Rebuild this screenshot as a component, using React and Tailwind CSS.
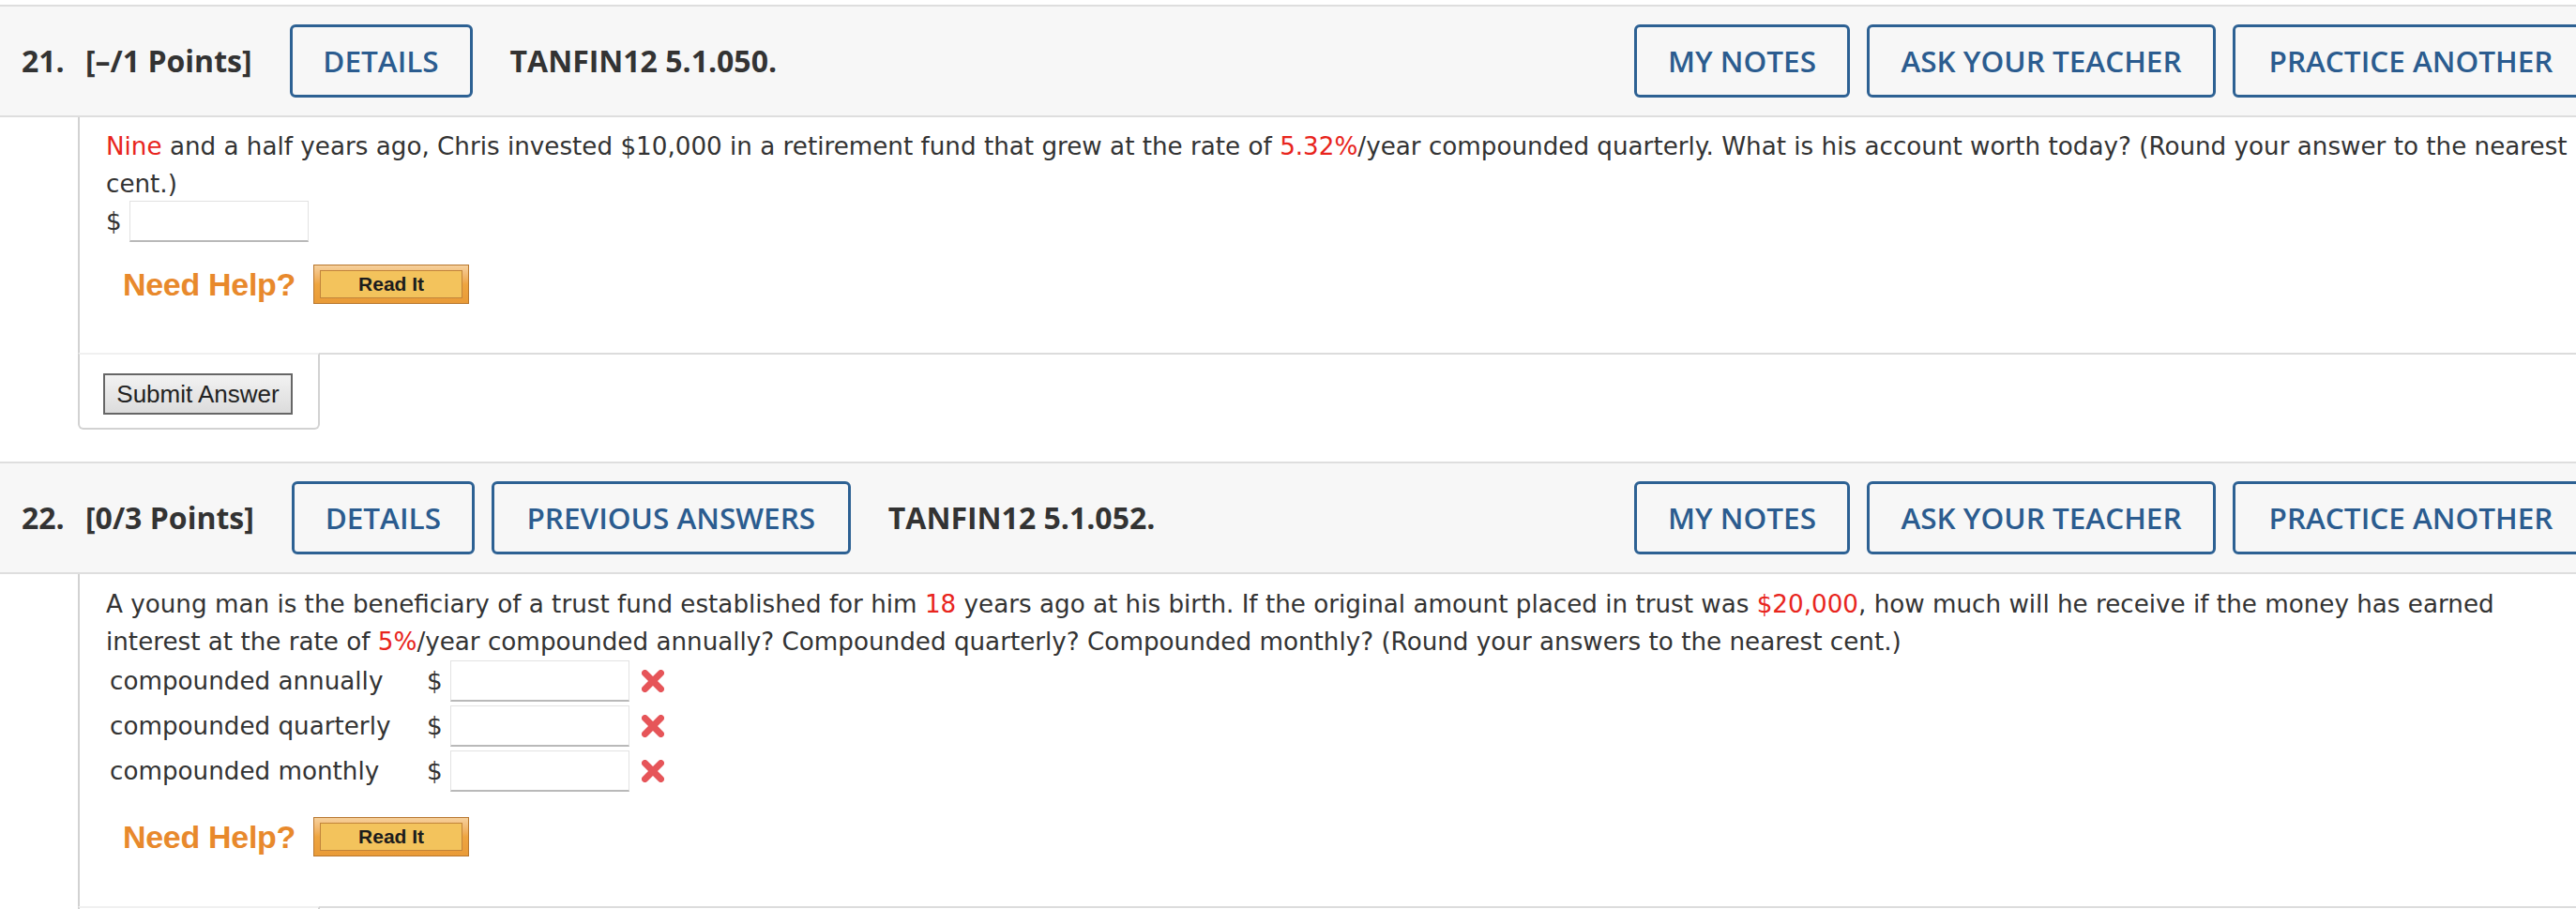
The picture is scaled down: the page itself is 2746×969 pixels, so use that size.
import React from 'react'

function HeadButton({ children, w }) {
  return (
    <div
      className={`${w} h-[78px] shrink-0 flex items-center justify-center rounded-[6px] border-[3px] border-[#2d6193] text-[#2b5c8f] text-[31.5px] font-semibold`}
    >
      {children}
    </div>
  )
}

function QuestionHeader({ num, points, left, code }) {
  return (
    <div className="h-[120px] border-y-2 border-[#dedede] bg-[#f7f7f7] flex items-center pl-[23px] pr-[40px] font-['Open_Sans',sans-serif]">
      <span className="w-[68px] shrink-0 text-[32px] font-bold text-[#333]">{num}</span>
      <span className="shrink-0 text-[32px] font-bold text-[#333] mr-[40px]">{points}</span>
      <div className="flex gap-[18px]">
        {left.map((b) => (
          <HeadButton key={b.label} w={b.w}>{b.label}</HeadButton>
        ))}
      </div>
      <span className="shrink-0 ml-[40px] text-[32px] font-bold text-[#333]">{code}</span>
      <div className="ml-auto flex gap-[18px]">
        <HeadButton w="w-[230px]">MY NOTES</HeadButton>
        <HeadButton w="w-[372px]">ASK YOUR TEACHER</HeadButton>
        <HeadButton w="w-[380px]">PRACTICE ANOTHER</HeadButton>
      </div>
    </div>
  )
}

function Red({ children }) {
  return <span className="text-[#e8251d]">{children}</span>
}

function AnswerInput() {
  return (
    <div className="w-[191px] h-[44px] shrink-0 bg-white border border-[#e2e2e2] border-b-[#b9b9b9] border-b-2" />
  )
}

function WrongMark() {
  return (
    <svg width="26" height="26" viewBox="0 0 26 26" className="ml-[12px]">
      <g stroke="#e4474c" strokeWidth="7" strokeLinecap="round" opacity="0.92">
        <line x1="4.5" y1="4.5" x2="21.5" y2="21.5" />
        <line x1="21.5" y1="4.5" x2="4.5" y2="21.5" />
      </g>
    </svg>
  )
}

function NeedHelp({ className }) {
  return (
    <div className={`flex items-center h-[42px] ml-[18px] ${className}`}>
      <span className="font-['Liberation_Sans',Arial,sans-serif] font-bold text-[34px] leading-[42px] text-[#e8892c] tracking-[-0.3px]">
        Need Help?
      </span>
      <div className="ml-[19px] w-[166px] h-[42px] bg-gradient-to-b from-[#f6d09c] via-[#eea540] to-[#e99b38] border border-[#b8772e] px-[6px] py-[5px]">
        <div className="h-full border border-[#c2843a] bg-[#f3c35c] flex items-center justify-center font-['Liberation_Sans',Arial,sans-serif] font-bold text-[21px] leading-[28px] text-[#1c1c1c]">
          Read It
        </div>
      </div>
    </div>
  )
}

function SubmitRow() {
  return (
    <div className="flex">
      <div className="w-[258px] shrink-0 border-2 border-[#d2d2d2] border-t-[#f0f0f0] rounded-b-[6px] pl-[25px] pt-[20px] pb-[14px]">
        <button className="w-[202px] h-[44px] border-2 border-[#666] bg-gradient-to-b from-[#f2f2f2] to-[#dcdcdc] font-['Liberation_Sans',Arial,sans-serif] text-[26px] leading-[38px] text-[#222]">
          Submit Answer
        </button>
      </div>
      <div className="flex-1 border-t-2 border-[#dcdcdc]" />
    </div>
  )
}

const q = "font-['DejaVu_Sans',Verdana,sans-serif] text-[26.2px] leading-[40px] text-[#333]"

export default function App() {
  return (
    <div className="w-[2746px] h-[969px] overflow-hidden bg-white pt-[5px]">
      <div className="w-[2800px]">
        <QuestionHeader
          num="21."
          points="[–/1 Points]"
          left={[{ label: 'DETAILS', w: 'w-[195px]' }]}
          code="TANFIN12 5.1.050."
        />
        <div className="ml-[83px]">
          <div className="border-l-2 border-[#d2d2d2] pl-[28px] pt-[11px] pb-[52px] pr-[10px]">
            <p className={q}>
              <Red>Nine</Red> and a half years ago, Chris invested $10,000 in a retirement fund that grew at the rate of{' '}
              <Red>5.32%</Red>/year compounded quarterly. What is his account worth today? (Round your answer to the nearest
              <br />
              cent.)
            </p>
            <div className={`flex items-center -mt-[2px] ${q}`}>
              <span className="w-[25px]">$</span>
              <AnswerInput />
            </div>
            <NeedHelp className="mt-[24px]" />
          </div>
          <SubmitRow />
        </div>

        <div className="mt-[34px]">
          <QuestionHeader
            num="22."
            points="[0/3 Points]"
            left={[
              { label: 'DETAILS', w: 'w-[195px]' },
              { label: 'PREVIOUS ANSWERS', w: 'w-[383px]' },
            ]}
            code="TANFIN12 5.1.052."
          />
        </div>
        <div className="ml-[83px]">
          <div className="border-l-2 border-[#d2d2d2] pl-[28px] pt-[12px] pb-[53px] pr-[10px]">
            <p className={q}>
              A young man is the beneficiary of a trust fund established for him <Red>18</Red> years ago at his birth. If the
              original amount placed in trust was <Red>$20,000</Red>, how much will he receive if the money has earned
              <br />
              interest at the rate of <Red>5%</Red>/year compounded annually? Compounded quarterly? Compounded monthly? (Round
              your answers to the nearest cent.)
            </p>
            <div className="flex flex-col gap-[4px]">
              {['compounded annually', 'compounded quarterly', 'compounded monthly'].map((label) => (
                <div key={label} className={`flex items-center pl-[4px] ${q}`}>
                  <span className="w-[338px] shrink-0">{label}</span>
                  <span className="w-[25px] shrink-0">$</span>
                  <AnswerInput />
                  <WrongMark />
                </div>
              ))}
            </div>
            <NeedHelp className="mt-[27px]" />
          </div>
          <SubmitRow />
        </div>
      </div>
    </div>
  )
}
